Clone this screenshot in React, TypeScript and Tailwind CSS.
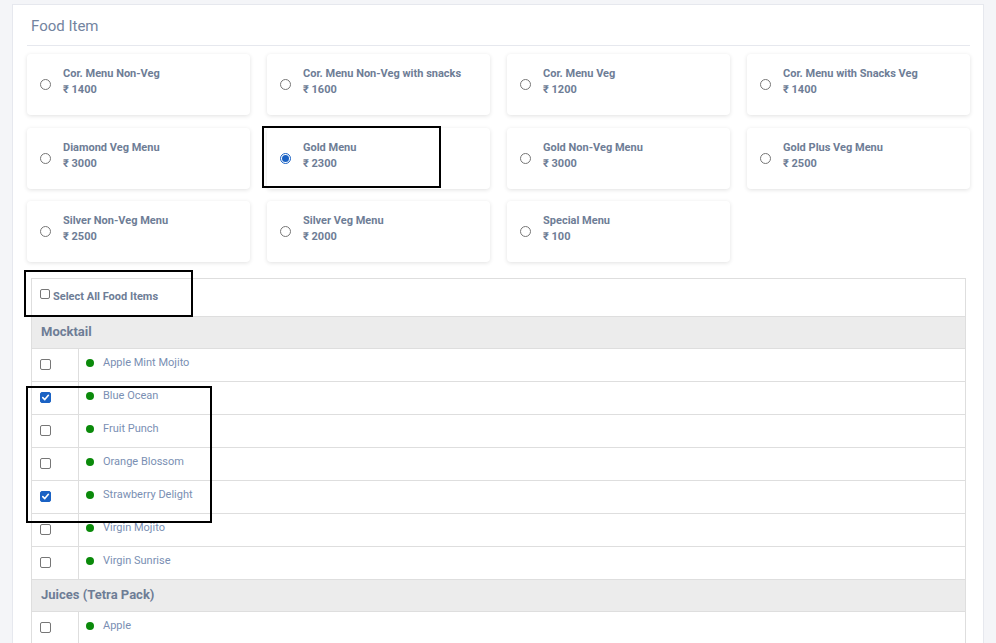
import React from "react";

const menus = [
  { name: "Cor. Menu Non-Veg", price: "1400" },
  { name: "Cor. Menu Non-Veg with snacks", price: "1600" },
  { name: "Cor. Menu Veg", price: "1200" },
  { name: "Cor. Menu with Snacks Veg", price: "1400" },
  { name: "Diamond Veg Menu", price: "3000" },
  { name: "Gold Menu", price: "2300", checked: true },
  { name: "Gold Non-Veg Menu", price: "3000" },
  { name: "Gold Plus Veg Menu", price: "2500" },
  { name: "Silver Non-Veg Menu", price: "2500" },
  { name: "Silver Veg Menu", price: "2000" },
  { name: "Special Menu", price: "100" },
];

const groups = [
  {
    title: "Mocktail",
    items: [
      { name: "Apple Mint Mojito" },
      { name: "Blue Ocean", checked: true },
      { name: "Fruit Punch" },
      { name: "Orange Blossom" },
      { name: "Strawberry Delight", checked: true },
      { name: "Virgin Mojito" },
      { name: "Virgin Sunrise" },
    ],
  },
  { title: "Juices (Tetra Pack)", items: [{ name: "Apple" }] },
];

function Radio({ checked }: { checked?: boolean }) {
  return (
    <span
      className={`flex h-[11px] w-[11px] shrink-0 items-center justify-center rounded-full border ${
        checked ? "border-[#1a62c4]" : "border-[#767676]"
      } bg-white`}
    >
      {checked && <span className="h-[7px] w-[7px] rounded-full bg-[#1a62c4]" />}
    </span>
  );
}

function Check({ checked, size = 11 }: { checked?: boolean; size?: number }) {
  return (
    <span
      className={`flex shrink-0 items-center justify-center rounded-[2px] border ${
        checked ? "border-[#1a62c4] bg-[#1a62c4]" : "border-[#767676] bg-white"
      }`}
      style={{ width: size, height: size }}
    >
      {checked && (
        <svg width="9" height="9" viewBox="0 0 10 10">
          <path d="M2 5.2 L4.2 7.3 L8.2 2.6" fill="none" stroke="white" strokeWidth="1.8" strokeLinecap="round" strokeLinejoin="round" />
        </svg>
      )}
    </span>
  );
}

export default function App() {
  return (
    <div
      className="h-[643px] overflow-hidden bg-[#f4f5f8] pl-[12px] pr-[12px] pt-[4px]"
      style={{ fontFamily: "Roboto, 'Liberation Sans', sans-serif" }}
    >
      <div className="relative h-[700px] border border-[#e6e8ee] bg-white pl-[14px] pr-[13px]">
        <div className="border-b border-[#e6e8ee] pb-[10px] pl-[4px] pt-[12px] text-[15px] leading-[18px] text-[#7384a0]">
          Food Item
        </div>
        <div className="mt-[8px] grid grid-cols-4 gap-x-[17px] gap-y-[12.5px]">
          {menus.map((m) => (
            <div
              key={m.name}
              className="flex h-[61px] items-center rounded-[4px] bg-white pl-[13px] shadow-[0_1px_4px_rgba(0,0,0,0.12)]"
            >
              <Radio checked={m.checked} />
              <div className="ml-[12px] -mt-[5px] text-[11px] font-bold leading-[16px] text-[#6e7d96]">
                <div>{m.name}</div>
                <div>₹ {m.price}</div>
              </div>
            </div>
          ))}
        </div>

        <div className="mx-[4px] mt-[15.5px] border border-[#dedede]">
          <div className="flex h-[37px] items-start pl-[8px] pt-[10px]">
            <Check size={10} />
            <span className="ml-[3px] mt-[1px] text-[11px] font-bold leading-[14px] text-[#6e7d96]">
              Select All Food Items
            </span>
          </div>
          {groups.map((g) => (
            <div key={g.title}>
              <div className="flex h-[32px] items-center border-t border-[#dedede] bg-[#ececec] pl-[9px] text-[13px] font-bold text-[#6e7d96]">
                {g.title}
              </div>
              {g.items.map((it) => (
                <div key={it.name} className="flex h-[33px] border-t border-[#dedede]">
                  <div className="flex w-[47px] shrink-0 items-start border-r border-[#dedede] pl-[8px] pt-[10px]">
                    <Check checked={it.checked} />
                  </div>
                  <div className="flex items-start pl-[7px] pt-[7px]">
                    <span className="mt-[3px] h-[8px] w-[8px] rounded-full bg-[#0a8a0a]" />
                    <span className="ml-[9px] text-[11px] leading-[14px] text-[#7a8fb3]">{it.name}</span>
                  </div>
                </div>
              ))}
            </div>
          ))}
        </div>

        <div className="pointer-events-none absolute left-[249px] top-[121px] h-[62px] w-[179px] border-2 border-black" />
        <div className="pointer-events-none absolute left-[11px] top-[265px] h-[47px] w-[169px] border-2 border-black" />
        <div className="pointer-events-none absolute left-[13px] top-[381px] h-[137px] w-[186px] border-2 border-black" />
      </div>
    </div>
  );
}
